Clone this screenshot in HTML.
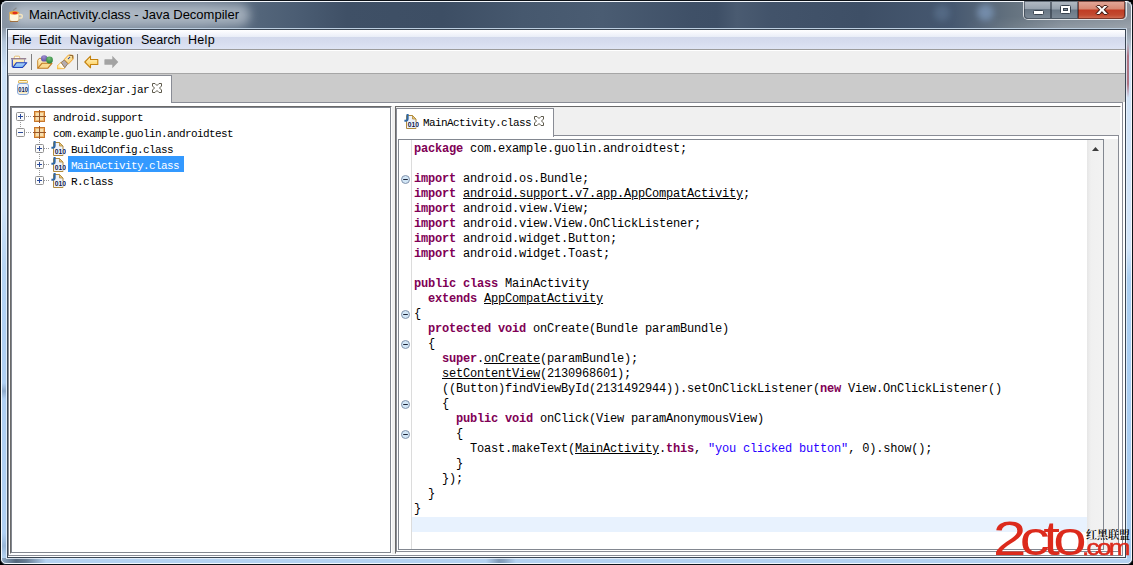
<!DOCTYPE html>
<html lang="en">
<head>
<meta charset="utf-8">
<title>MainActivity.class - Java Decompiler</title>
<style>
html,body{margin:0;padding:0;background:#000;}
body{width:1133px;height:565px;overflow:hidden;position:relative;font-family:"Liberation Sans",sans-serif;}
#win{position:absolute;left:0;top:0;width:1133px;height:565px;overflow:hidden;}
.abs{position:absolute;}
/* window frame */
#frame{position:absolute;left:0;top:0;width:1131px;height:563px;border:1px solid #0d1218;border-radius:7px 7px 6px 6px;background:#b4d2f1;}
#frameHi{position:absolute;left:1px;top:1px;width:1129px;height:561px;border:1px solid rgba(255,255,255,.85);border-radius:6px 6px 5px 5px;}
#title{position:absolute;left:2px;top:2px;width:1129px;height:26px;overflow:hidden;background:linear-gradient(90deg,#8995a4 0px,#8391a1 20px,#74849600 21px),linear-gradient(90deg,#8995a4 0px,#8290a0 20px,#6d7d90 200px,#53657a 258px,#4b5d73 295px,#3f5066 345px,#3d4e64 440px,#46586e 520px,#4a5c72 600px,#3f5067 690px,#3e4f66 715px,#4a5b71 735px,#42536a 770px,#3e4f66 860px,#465870 950px,#64727f 1010px,#7a8692 1060px,#88929c 1129px);}
#glow{position:absolute;left:10px;top:2px;width:238px;height:22px;border-radius:11px;background:rgba(228,233,240,.5);filter:blur(5px);}
#fin{position:absolute;left:6px;top:28px;width:1119px;height:529px;border:1px solid rgba(235,243,252,.8);border-top-color:rgba(190,204,218,.75);}
#fin2{position:absolute;left:7px;top:29px;width:1117px;height:527px;border:1px solid #3a4654;}
#titleTxt{position:absolute;left:29px;top:6.500px;font-size:13px;letter-spacing:-0.09px;line-height:16px;color:#000;white-space:nowrap;letter-spacing:0px;}
#client{position:absolute;left:8px;top:30px;width:1117px;height:527px;background:#fff;overflow:hidden;}
/* menu */
#menu{position:absolute;left:0;top:0;width:1117px;height:19px;background:linear-gradient(180deg,#ffffff 0px,#f3f5fb 4px,#e9edf7 7px,#d3d9ec 7px,#d6dcee 12px,#dee4f4 19px);}
#menuLine{position:absolute;left:0;top:19px;width:1117px;height:1px;background:#9c9c9c;}
.mi{position:absolute;top:2px;font-size:12.5px;line-height:16px;color:#000;white-space:nowrap;}
/* toolbar */
#tb{position:absolute;left:0;top:20px;width:1117px;height:23px;background:#f0f0f0;border-top:1px solid #fff;box-sizing:border-box;}
#tbLine{position:absolute;left:0;top:43px;width:1117px;height:1px;background:#a6a6a6;}
/* outer tab strip */
#strip{position:absolute;left:0;top:44px;width:1117px;height:28px;background:#cbcbcb;}
.mono{font-family:"Liberation Mono","Noto Sans CJK SC",monospace;}
.ui{font-family:"Liberation Mono","Noto Sans CJK SC",monospace;font-size:11px;letter-spacing:-0.6px;line-height:16px;white-space:nowrap;color:#000;}

/* generic line helper */
.ln{position:absolute;background:#898c95;}
#tab1{position:absolute;left:0;top:45px;width:162px;height:28px;background:#fff;border:1px solid #898c95;border-bottom:none;}
#cLine{position:absolute;left:0;top:72px;width:1115px;height:454px;border:1px solid #898c95;box-sizing:border-box;background:#fff;}
#lp{position:absolute;left:2px;top:76px;width:380px;height:446px;border:1px solid;border-color:#696969 #fff #fff #696969;background:#fff;}
#lpi{position:absolute;left:0;top:0;width:378px;height:444px;border:1px solid #828790;background:#fff;overflow:hidden;}
#div{position:absolute;left:384px;top:76px;width:3px;height:448px;background:#f0f0f0;}
#rp{position:absolute;left:387px;top:76px;width:724px;height:446px;border:1px solid;border-color:#696969 #fff #fff #696969;background:#f0f0f0;}
#rcont{position:absolute;left:0;top:28px;width:721px;height:415px;border:1px solid #898c95;background:#fff;}
#tab2{position:absolute;left:0;top:1px;width:156px;height:28px;border:1px solid #898c95;border-bottom:none;background:#fff;}
#sp{position:absolute;left:1px;top:3px;width:704px;height:409px;border:1px solid #828790;background:#fff;overflow:hidden;}
#ovr{position:absolute;left:707px;top:3px;width:14px;height:411px;background:#f0f0f0;}
#gline{position:absolute;left:12px;top:0;width:1px;height:409px;background:#dcdcdc;}
#sb{position:absolute;left:688px;top:0;width:16px;height:409px;background:linear-gradient(90deg,#e6e6e6,#f0f0f0 4px,#f2f2f2);}
#cur{position:absolute;left:13px;top:377px;width:675px;height:15px;background:#e8f2fe;}
#code{position:absolute;left:15px;top:2px;margin:0;font-family:"Liberation Mono",monospace;font-size:12px;letter-spacing:-0.2px;line-height:15px;color:#000;white-space:pre;}
#code b{color:#7f0055;font-weight:bold;}
#code u{text-decoration:underline;text-underline-offset:1px;}
#code i{font-style:normal;color:#2a00ff;}
.fold{position:absolute;left:2px;width:9px;height:9px;}
.row{position:absolute;height:16px;}
.sel{position:absolute;background:#3399ff;color:#fff;}
.wl{position:absolute;font-family:"Liberation Sans",sans-serif;line-height:60px;color:#dc2a1c;transform-origin:0 0;white-space:nowrap;}
.ws{-webkit-text-stroke:.5px #dc2a1c;}
</style>
</head>
<body>
<div id="win">
<div id="frame"></div>
<div id="title"><div id="glow"></div><div class="abs" style="left:960px;top:0;width:169px;height:26px;background:linear-gradient(90deg,rgba(255,255,255,0),rgba(255,255,255,1) 60%);-webkit-mask-image:linear-gradient(180deg,transparent 55%,rgba(0,0,0,.16));mask-image:linear-gradient(180deg,transparent 55%,rgba(0,0,0,.16))"></div><div class="abs" style="left:932px;top:3px;width:16px;height:16px;border-radius:8px;background:rgba(96,120,150,.55);filter:blur(3px)"></div><div class="abs" style="left:975px;top:2px;width:17px;height:17px;border-radius:9px;background:rgba(125,152,185,.75);filter:blur(3px)"></div></div>
<div class="abs" style="left:1126px;top:28px;width:5px;height:530px;background:linear-gradient(180deg,#8f99a3 0,#a7b3c0 12px,#cfe2f6 30px,#d3e6fa 220px,#abcff2 250px,#a9cdf1 100%)"></div>
<div class="abs" style="left:1126px;top:42px;width:3px;height:56px;background:linear-gradient(180deg,rgba(168,96,110,0),rgba(168,96,110,.85) 25%,rgba(168,96,110,.85) 75%,rgba(168,96,110,0))"></div>
<div class="abs" style="left:2px;top:28px;width:4px;height:530px;background:linear-gradient(180deg,#8f9baa 0,#b4c6da 14px,#cbe0f6 40px,#cde2f8 180px,#b6d4f3 240px,#b0d0f4 300px,#b0d0f4 355px,#8eaacc 363px,#b0d0f4 371px,#b0d0f4 505px,#98b6d8 518px,#b4d3f2 530px)"></div>
<div class="abs" style="left:2px;top:558px;width:1129px;height:5px;background:linear-gradient(90deg,rgba(70,86,104,.35) 0,rgba(62,78,96,.8) 14px,rgba(62,78,96,.65) 24px,rgba(62,78,96,0) 44px,rgba(62,78,96,0) 484px,rgba(84,106,134,.55) 497px,rgba(84,106,134,.45) 502px,rgba(62,78,96,0) 514px)"></div>
<div id="fin"></div><div id="fin2"></div>
<div id="frameHi"></div>

<!-- caption buttons -->
<div id="capb" class="abs" style="left:1023px;top:1px;width:102px;height:18px;border:1px solid rgba(255,255,255,.75);border-top:none;border-radius:0 0 5px 5px;box-sizing:content-box;"></div>
<div class="abs" style="left:1024px;top:1px;width:27px;height:18px;border-radius:0 0 0 4px;background:linear-gradient(180deg,#b4bcc5 0,#97a2ae 8px,#66748240 8px,#6a7886 9px,#7d8a97 18px);box-shadow:inset 0 0 0 1px rgba(40,50,62,.55)"></div>
<div class="abs" style="left:1051px;top:1px;width:27px;height:18px;background:linear-gradient(180deg,#b4bcc5 0,#97a2ae 8px,#6a7886 9px,#7d8a97 18px);box-shadow:inset 0 0 0 1px rgba(40,50,62,.55)"></div>
<div class="abs" style="left:1078px;top:1px;width:47px;height:18px;border-radius:0 0 4px 0;background:linear-gradient(180deg,#e3aa9c 0,#d88873 8px,#c03c24 9px,#c24a30 14px,#d2735a 18px);box-shadow:inset 0 0 0 1px rgba(70,20,15,.6)"></div>
<svg class="abs" style="left:1033px;top:10px" width="11" height="5" viewBox="0 0 11 5"><rect x=".5" y=".5" width="10" height="4" rx=".8" fill="#fff" stroke="#3a4450"/></svg>
<svg class="abs" style="left:1060px;top:5px" width="11" height="9" viewBox="0 0 11 9"><rect x=".5" y=".5" width="10" height="8" rx="1" fill="#fff" stroke="#3a4450"/><rect x="3.500" y="3.500" width="4" height="2" fill="#7f8c99" stroke="#3a4450"/></svg>
<div class="abs" style="left:1095px;top:1px;width:14px;height:16px;font:bold 15.500px/16px 'Liberation Sans',sans-serif;color:#fff;text-align:center;text-shadow:0 0 1px #3a1410,1px 0 0 #4a2018,-1px 0 0 #4a2018,0 1px 0 #4a2018,0 -1px 0 #4a2018;transform:scale(1.32,1)">x</div>
<!-- java cup icon -->
<svg class="abs" style="left:8px;top:7px" width="16" height="16" viewBox="0 0 16 16"><path d="M5 3.500L8.500 .8" stroke="#8a8a8a" stroke-width="1.200"/><path d="M1.500 5.500h9.500v6.500q0 2.500-2.500 2.500h-4.500q-2.500 0-2.500-2.500z" fill="#fdf6e0" stroke="#c8a868" stroke-width=".8"/><ellipse cx="6.200" cy="5.800" rx="4.600" ry="1.900" fill="#f0a030"/><ellipse cx="7" cy="6" rx="2.600" ry="1.200" fill="#e03020"/><path d="M11 7.500h1.500q1.800 0 1.800 1.800t-1.800 1.800h-1.500" fill="none" stroke="#f3e4c0" stroke-width="1.500"/><path d="M2 14.500h8" stroke="#a07040" stroke-width="1"/></svg>
<div id="titleTxt">MainActivity.class - Java Decompiler</div>
<div id="client">
  <div id="menu"></div><div id="menuLine"></div>
  <span class="mi" style="left:4px;letter-spacing:-0.2px">File</span>
  <span class="mi" style="left:31px;letter-spacing:0.2px">Edit</span>
  <span class="mi" style="left:62px;letter-spacing:0.4px">Navigation</span>
  <span class="mi" style="left:133px;letter-spacing:0px">Search</span>
  <span class="mi" style="left:180px;letter-spacing:0.3px">Help</span>
  <div id="tb"></div><div id="tbLine"></div>

  <!-- toolbar icons -->
  <svg class="abs" style="left:3px;top:25px" width="17" height="14" viewBox="0 0 17 14"><defs><linearGradient id="g1" x1="0" y1="0" x2="0" y2="1"><stop offset="0" stop-color="#fff6d2"/><stop offset="1" stop-color="#fad476"/></linearGradient><linearGradient id="g2" x1="0" y1="0" x2="0" y2="1"><stop offset="0" stop-color="#b4dcff"/><stop offset="1" stop-color="#74aef0"/></linearGradient></defs><rect x="3.300" y="1.200" width="5.400" height="3" rx="1" fill="#fffdf4" stroke="#e2b45e" stroke-width=".9"/><rect x="1.700" y="4" width="11.800" height="8" fill="url(#g1)"/><path d="M13.500 4.400v3.500" stroke="#8290cc" stroke-width=".9"/><path d="M0 3.750h15.200" stroke="#8c7488" stroke-width="1.300"/><path d="M1.300 4.400v7.600" stroke="#2a48c0" stroke-width="1.200"/><path d="M5.500 7.700h10.300l-4.300 4.800h-9.600z" fill="url(#g2)" stroke="#1e3eb8" stroke-width="1.100" stroke-linejoin="round"/></svg>
  <div class="abs" style="left:23px;top:24px;width:1px;height:16px;background:#7e7e7e"></div>
  <svg class="abs" style="left:29px;top:24px" width="16" height="16" viewBox="0 0 16 16"><defs><radialGradient id="g3" cx=".45" cy=".3" r=".75"><stop offset="0" stop-color="#a090d0"/><stop offset="1" stop-color="#5a4a9c"/></radialGradient><radialGradient id="g4" cx=".45" cy=".3" r=".75"><stop offset="0" stop-color="#78c078"/><stop offset="1" stop-color="#1f7a34"/></radialGradient><linearGradient id="g8" x1="0" y1="0" x2="0" y2="1"><stop offset="0" stop-color="#fff2cc"/><stop offset="1" stop-color="#f8d482"/></linearGradient></defs><path d="M.7 14V6.500q0-1 1-1.200l.5-.9h2.500l.6 1.300h6v4z" fill="url(#g8)" stroke="#c88a30" stroke-width="1" stroke-linejoin="round"/><path d="M4.900 9.300h10l-4.200 5h-10z" fill="#fbdc92" stroke="#c07a22" stroke-width="1.100" stroke-linejoin="round"/><circle cx="7.200" cy="4.400" r="3.200" fill="url(#g3)"/><circle cx="12.500" cy="6" r="3.400" fill="url(#g4)"/></svg>
  <svg class="abs" style="left:49px;top:24px" width="17" height="16" viewBox="0 0 17 16"><defs><linearGradient id="g5" x1="0" y1="0" x2="1" y2="1"><stop offset="0" stop-color="#fff4c8"/><stop offset="1" stop-color="#f6cc6a"/></linearGradient><linearGradient id="g7" x1="1" y1="0" x2="0" y2="1"><stop offset="0" stop-color="#ffe070"/><stop offset=".45" stop-color="#ffffff"/><stop offset="1" stop-color="#ffd040"/></linearGradient></defs><path d="M7.100 5.600L11.500 1L15.900 1.400L16.100 5.100L11.500 9.900z" fill="url(#g5)" stroke="#f0a02c" stroke-width="1" stroke-linejoin="round"/><path d="M12.500 1.300L15.700 1.500L15.800 4.500" fill="none" stroke="#7a5a30" stroke-width=".9"/><path d="M0 12.200L4.100 8.300L7.800 13.600L7.400 14.600L.2 14.800z" fill="url(#g7)" stroke="#f0a830" stroke-width=".8" stroke-linejoin="round"/><path d="M4.100 8.500L7.300 6L10.800 9.700L7.800 13.700z" fill="#b4acb0" stroke="#94764e" stroke-width=".9" stroke-linejoin="round"/><circle cx="11.500" cy="4.500" r=".65" fill="#2c4cb0"/><circle cx="12.600" cy="3.500" r=".65" fill="#2c4cb0"/></svg>
  <div class="abs" style="left:69px;top:24px;width:1px;height:16px;background:#7e7e7e"></div>
  <svg class="abs" style="left:76px;top:25px" width="15" height="14" viewBox="0 0 15 14"><defs><linearGradient id="g6" x1="0" y1="0" x2="0" y2="1"><stop offset="0" stop-color="#fff6d4"/><stop offset=".5" stop-color="#ffe089"/><stop offset="1" stop-color="#fcc24c"/></linearGradient></defs><path d="M.8 7L6.500 1.200v3.300h7.300v5h-7.300v3.300z" fill="url(#g6)" stroke="#c4820e" stroke-width="1.100" stroke-linejoin="round"/></svg>
  <svg class="abs" style="left:96px;top:25px" width="15" height="14" viewBox="0 0 15 14"><path d="M14.300 7L8.300 .8v3.400h-7.300q-.6 0-.6 .6v4.400q0 .6 .6 .6h7.300v3.400z" fill="#a3a3a3"/></svg>
  <div id="strip"></div>

  <div id="tab1"></div>
  <div id="cLine"></div>
  <div id="tab1c" class="abs" style="left:1px;top:72px;width:162px;height:2px;background:#fff"></div>
  <svg class="abs" style="left:9px;top:50px" width="12" height="15" viewBox="0 0 12 15"><rect x="1.500" y=".5" width="9" height="2.500" rx="1" fill="#fff6d8" stroke="#d6a638"/><rect x=".5" y="3.500" width="11" height="11" rx="2.500" fill="#eef4fc" stroke="#86a8d8"/><rect x="2" y="12" width="8" height="1.500" fill="#fbe9b8"/><text x="1.200" y="11.500" font-family="Liberation Sans, sans-serif" font-weight="bold" font-size="7" fill="#101c50" textLength="9.800" lengthAdjust="spacingAndGlyphs">010</text></svg>
  <span class="ui abs" style="left:27px;top:52px">classes-dex2jar.jar</span>
  <svg class="abs" style="left:144px;top:53px" width="10" height="10" viewBox="0 0 10 10"><path d="M.5 .5h2.500l2 2 2-2h2.500v2.500l-2 2 2 2v2.500h-2.500l-2-2-2 2h-2.500v-2.500l2-2-2-2z" fill="#fff" stroke="#5e5a4c" stroke-width="1" stroke-linejoin="round"/></svg>
  <div id="lp"><div id="lpi">
<svg class="abs" style="left:4px;top:4px" width="9" height="9" viewBox="0 0 9 9"><rect x=".5" y=".5" width="8" height="8" rx="1" fill="#fbfbfb" stroke="#919191"/><path d="M2 4.500h5M4.500 2v5" stroke="#2a4a9a"/></svg>
<div class="abs" style="left:14px;top:8px;width:6px;height:1px;background:repeating-linear-gradient(90deg,#9a9a9a 0 1px,transparent 1px 2px)"></div>
<svg class="abs" style="left:21px;top:2px" width="13" height="13" viewBox="0 0 13 13"><rect x="1.5" y="1.5" width="10" height="10" fill="#f7dfae" stroke="#c8772a"/><rect x="2.5" y="2.5" width="8" height="8" fill="none" stroke="#eeb56c"/><path d="M6.5 0v13M0 6.5h13" stroke="#96562a"/></svg>
<span class="ui abs" style="left:41px;top:2px">android.support</span>
<div class="abs" style="left:8px;top:14px;width:1px;height:6px;background:repeating-linear-gradient(180deg,#9a9a9a 0 1px,transparent 1px 2px)"></div>
<svg class="abs" style="left:4px;top:20px" width="9" height="9" viewBox="0 0 9 9"><rect x=".5" y=".5" width="8" height="8" rx="1" fill="#fbfbfb" stroke="#919191"/><path d="M2 4.500h5" stroke="#2a4a9a"/></svg>
<div class="abs" style="left:14px;top:24px;width:6px;height:1px;background:repeating-linear-gradient(90deg,#9a9a9a 0 1px,transparent 1px 2px)"></div>
<svg class="abs" style="left:21px;top:18px" width="13" height="13" viewBox="0 0 13 13"><rect x="1.5" y="1.5" width="10" height="10" fill="#f7dfae" stroke="#c8772a"/><rect x="2.5" y="2.5" width="8" height="8" fill="none" stroke="#eeb56c"/><path d="M6.5 0v13M0 6.5h13" stroke="#96562a"/></svg>
<span class="ui abs" style="left:41px;top:18px">com.example.guolin.androidtest</span>
<div class="abs" style="left:27px;top:32px;width:1px;height:3px;background:repeating-linear-gradient(180deg,#9a9a9a 0 1px,transparent 1px 2px)"></div>
<svg class="abs" style="left:23px;top:36px" width="9" height="9" viewBox="0 0 9 9"><rect x=".5" y=".5" width="8" height="8" rx="1" fill="#fbfbfb" stroke="#919191"/><path d="M2 4.500h5M4.500 2v5" stroke="#2a4a9a"/></svg>
<div class="abs" style="left:32px;top:40px;width:6px;height:1px;background:repeating-linear-gradient(90deg,#9a9a9a 0 1px,transparent 1px 2px)"></div>
<svg class="abs" style="left:39px;top:33px" width="15" height="15" viewBox="0 0 15 15"><path d="M2.5 1.5h6l3.500 3.500v9.500h-9.500z" fill="#eef2fa" stroke="#b08a3c"/><path d="M8.500 1.500v3.500h3.500z" fill="#e8c67a" stroke="#b08a3c" stroke-width=".8"/><path d="M3.600 0v4.800q0 2-2 2h-1.200" fill="none" stroke="#2f68a6" stroke-width="2.100"/><rect x="3" y="8" width="12" height="5.500" fill="#eef2fa"/><text x="3.800" y="13" font-family="Liberation Sans, sans-serif" font-weight="bold" font-size="7.200" fill="#101c50" textLength="11.200" lengthAdjust="spacingAndGlyphs">010</text></svg>
<div class="abs" style="left:27px;top:46px;width:1px;height:6px;background:repeating-linear-gradient(180deg,#9a9a9a 0 1px,transparent 1px 2px)"></div>
<span class="ui abs" style="left:59px;top:34px">BuildConfig.class</span>
<svg class="abs" style="left:23px;top:52px" width="9" height="9" viewBox="0 0 9 9"><rect x=".5" y=".5" width="8" height="8" rx="1" fill="#fbfbfb" stroke="#919191"/><path d="M2 4.500h5M4.500 2v5" stroke="#2a4a9a"/></svg>
<div class="abs" style="left:32px;top:56px;width:6px;height:1px;background:repeating-linear-gradient(90deg,#9a9a9a 0 1px,transparent 1px 2px)"></div>
<svg class="abs" style="left:39px;top:49px" width="15" height="15" viewBox="0 0 15 15"><path d="M2.5 1.5h6l3.500 3.500v9.500h-9.500z" fill="#eef2fa" stroke="#b08a3c"/><path d="M8.500 1.500v3.500h3.500z" fill="#e8c67a" stroke="#b08a3c" stroke-width=".8"/><path d="M3.600 0v4.800q0 2-2 2h-1.200" fill="none" stroke="#2f68a6" stroke-width="2.100"/><rect x="3" y="8" width="12" height="5.500" fill="#eef2fa"/><text x="3.800" y="13" font-family="Liberation Sans, sans-serif" font-weight="bold" font-size="7.200" fill="#101c50" textLength="11.200" lengthAdjust="spacingAndGlyphs">010</text></svg>
<div class="abs" style="left:27px;top:62px;width:1px;height:6px;background:repeating-linear-gradient(180deg,#9a9a9a 0 1px,transparent 1px 2px)"></div>
<div class="sel" style="left:56px;top:48px;width:116px;height:16px"></div>
<span class="ui abs" style="left:59px;top:50px;color:#fff">MainActivity.class</span>
<svg class="abs" style="left:23px;top:68px" width="9" height="9" viewBox="0 0 9 9"><rect x=".5" y=".5" width="8" height="8" rx="1" fill="#fbfbfb" stroke="#919191"/><path d="M2 4.500h5M4.500 2v5" stroke="#2a4a9a"/></svg>
<div class="abs" style="left:32px;top:72px;width:6px;height:1px;background:repeating-linear-gradient(90deg,#9a9a9a 0 1px,transparent 1px 2px)"></div>
<svg class="abs" style="left:39px;top:65px" width="15" height="15" viewBox="0 0 15 15"><path d="M2.5 1.5h6l3.500 3.500v9.500h-9.500z" fill="#eef2fa" stroke="#b08a3c"/><path d="M8.500 1.500v3.500h3.500z" fill="#e8c67a" stroke="#b08a3c" stroke-width=".8"/><path d="M3.600 0v4.800q0 2-2 2h-1.200" fill="none" stroke="#2f68a6" stroke-width="2.100"/><rect x="3" y="8" width="12" height="5.500" fill="#eef2fa"/><text x="3.800" y="13" font-family="Liberation Sans, sans-serif" font-weight="bold" font-size="7.200" fill="#101c50" textLength="11.200" lengthAdjust="spacingAndGlyphs">010</text></svg>
<span class="ui abs" style="left:59px;top:66px">R.class</span>
  </div></div>
  <div id="div"></div>
  <div id="rp">
    <div id="rcont">
      <div id="sp">
        <div id="cur"></div>
        <div id="gline"></div>
        <svg class="fold" style="top:35px" viewBox="0 0 9 9"><circle cx="4.500" cy="4.500" r="4" fill="#d2e6f6" stroke="#8292ac"/><path d="M2.200 4.500h4.600" stroke="#1c2438"/></svg><svg class="fold" style="top:170px" viewBox="0 0 9 9"><circle cx="4.500" cy="4.500" r="4" fill="#d2e6f6" stroke="#8292ac"/><path d="M2.200 4.500h4.600" stroke="#1c2438"/></svg><svg class="fold" style="top:200px" viewBox="0 0 9 9"><circle cx="4.500" cy="4.500" r="4" fill="#d2e6f6" stroke="#8292ac"/><path d="M2.200 4.500h4.600" stroke="#1c2438"/></svg><svg class="fold" style="top:260px" viewBox="0 0 9 9"><circle cx="4.500" cy="4.500" r="4" fill="#d2e6f6" stroke="#8292ac"/><path d="M2.200 4.500h4.600" stroke="#1c2438"/></svg><svg class="fold" style="top:290px" viewBox="0 0 9 9"><circle cx="4.500" cy="4.500" r="4" fill="#d2e6f6" stroke="#8292ac"/><path d="M2.200 4.500h4.600" stroke="#1c2438"/></svg>
        <pre id="code"><b>package</b> com.example.guolin.androidtest;

<b>import</b> android.os.Bundle;
<b>import</b> <u>android.support.v7.app.AppCompatActivity</u>;
<b>import</b> android.view.View;
<b>import</b> android.view.View.OnClickListener;
<b>import</b> android.widget.Button;
<b>import</b> android.widget.Toast;

<b>public</b> <b>class</b> MainActivity
  <b>extends</b> <u>AppCompatActivity</u>
{
  <b>protected</b> <b>void</b> onCreate(Bundle paramBundle)
  {
    <b>super</b>.<u>onCreate</u>(paramBundle);
    <u>setContentView</u>(2130968601);
    ((Button)findViewById(2131492944)).setOnClickListener(<b>new</b> View.OnClickListener()
    {
      <b>public</b> <b>void</b> onClick(View paramAnonymousView)
      {
        Toast.makeText(<u>MainActivity</u>.<b>this</b>, <i>"you clicked button"</i>, 0).show();
      }
    });
  }
}</pre>
        <div id="sb"><svg class="abs" style="left:5px;top:7px" width="7" height="4" viewBox="0 0 7 4"><path d="M0 4L3.500 0L7 4z" fill="#3c3c3c"/></svg></div>
      </div>
      <div id="ovr"></div>
    </div>
    <div class="abs" style="left:723px;top:28px;width:1px;height:418px;background:#fbfbfb"></div><div class="abs" style="left:0;top:445px;width:724px;height:1px;background:#fbfbfb"></div>
    <div id="tab2"></div>
    <svg class="abs" style="left:8px;top:7px" width="15" height="15" viewBox="0 0 15 15"><path d="M2.5 1.5h6l3.500 3.500v9.500h-9.500z" fill="#eef2fa" stroke="#b08a3c"/><path d="M8.500 1.500v3.500h3.500z" fill="#e8c67a" stroke="#b08a3c" stroke-width=".8"/><path d="M3.600 0v4.800q0 2-2 2h-1.200" fill="none" stroke="#2f68a6" stroke-width="2.100"/><rect x="3" y="8" width="12" height="5.500" fill="#eef2fa"/><text x="3.800" y="13" font-family="Liberation Sans, sans-serif" font-weight="bold" font-size="7.200" fill="#101c50" textLength="11.200" lengthAdjust="spacingAndGlyphs">010</text></svg>
    <span class="ui abs" style="left:27px;top:8px">MainActivity.class</span>
    <svg class="abs" style="left:138px;top:9px" width="10" height="10" viewBox="0 0 10 10"><path d="M.5 .5h2.500l2 2 2-2h2.500v2.500l-2 2 2 2v2.500h-2.500l-2-2-2 2h-2.500v-2.500l2-2-2-2z" fill="#fff" stroke="#5e5a4c" stroke-width="1" stroke-linejoin="round"/></svg>
  </div>
</div>

<!-- watermark -->
<div id="wm"><span class="wl" style="left:993.300px;top:507.100px;font-size:44.500px;letter-spacing:-4.900px;transform:scale(1.35,1.065)">2cto</span><span class="wl ws" style="left:1081.600px;top:518px;font-size:21.700px;letter-spacing:-2.200px;transform:scale(1.2,1)">.com</span></div>
<div id="wmz" class="abs" style="left:1086px;top:527.500px;font:600 11px/14px 'Liberation Serif','Noto Serif CJK SC',serif;color:#000;white-space:nowrap;">红黑联盟</div>
</div>
</body>
</html>
